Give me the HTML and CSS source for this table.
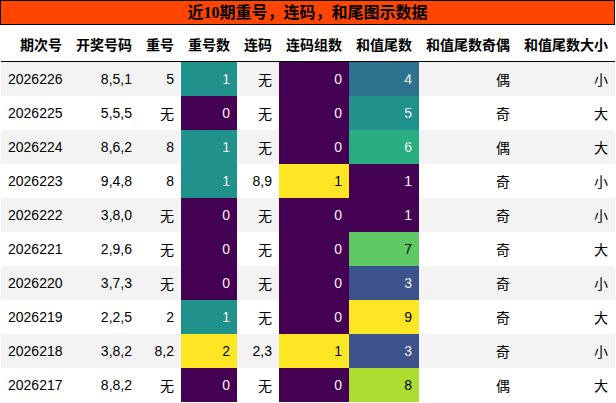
FILE: index.html
```html
<!DOCTYPE html>
<html lang="zh">
<head>
<meta charset="utf-8">
<title>近10期重号，连码，和尾图示数据</title>
<link rel="stylesheet" href="styles.css">
</head>
<body>
<div class="wrap">
  <div class="title">近10期重号，连码，和尾图示数据</div>
  <table class="grid">
    <colgroup>
      <col class="c1"><col class="c2"><col class="c3"><col class="c4"><col class="c5"><col class="c6"><col class="c7"><col class="c8"><col class="c9">
    </colgroup>
    <thead>
      <tr><th>期次号</th><th>开奖号码</th><th>重号</th><th>重号数</th><th>连码</th><th>连码组数</th><th>和值尾数</th><th>和值尾数奇偶</th><th>和值尾数大小</th></tr>
    </thead>
    <tbody>
      <tr><td>2026226</td><td>8,5,1</td><td>5</td><td class="v5">1</td><td>无</td><td class="v0">0</td><td class="v375">4</td><td>偶</td><td>小</td></tr>
      <tr><td>2026225</td><td>5,5,5</td><td>无</td><td class="v0">0</td><td>无</td><td class="v0">0</td><td class="v5">5</td><td>奇</td><td>大</td></tr>
      <tr><td>2026224</td><td>8,6,2</td><td>8</td><td class="v5">1</td><td>无</td><td class="v0">0</td><td class="v625">6</td><td>偶</td><td>大</td></tr>
      <tr><td>2026223</td><td>9,4,8</td><td>8</td><td class="v5">1</td><td>8,9</td><td class="v1">1</td><td class="v0">1</td><td>奇</td><td>小</td></tr>
      <tr><td>2026222</td><td>3,8,0</td><td>无</td><td class="v0">0</td><td>无</td><td class="v0">0</td><td class="v0">1</td><td>奇</td><td>小</td></tr>
      <tr><td>2026221</td><td>2,9,6</td><td>无</td><td class="v0">0</td><td>无</td><td class="v0">0</td><td class="v75">7</td><td>奇</td><td>大</td></tr>
      <tr><td>2026220</td><td>3,7,3</td><td>无</td><td class="v0">0</td><td>无</td><td class="v0">0</td><td class="v25">3</td><td>奇</td><td>小</td></tr>
      <tr><td>2026219</td><td>2,2,5</td><td>2</td><td class="v5">1</td><td>无</td><td class="v0">0</td><td class="v1">9</td><td>奇</td><td>大</td></tr>
      <tr><td>2026218</td><td>3,8,2</td><td>8,2</td><td class="v1">2</td><td>2,3</td><td class="v1">1</td><td class="v25">3</td><td>奇</td><td>小</td></tr>
      <tr><td>2026217</td><td>8,8,2</td><td>无</td><td class="v0">0</td><td>无</td><td class="v0">0</td><td class="v875">8</td><td>偶</td><td>大</td></tr>
    </tbody>
  </table>
</div>
</body>
</html>
```
FILE: styles.css
```css
html, body {
  margin: 0;
  padding: 0;
  background: #ffffff;
}

.wrap {
  width: 615px;
}

.title {
  box-sizing: border-box;
  width: 615px;
  height: 25px;
  border: 1px solid #000;
  background: #ff4500;
  color: #000;
  font-family: "Liberation Serif", "Noto Sans CJK SC", serif;
  font-weight: bold;
  font-size: 16px;
  line-height: 23px;
  text-align: center;
}

.grid {
  margin-left: 1px;
  width: 614px;
  table-layout: fixed;
  border-collapse: collapse;
  border-spacing: 0;
  font-family: "Liberation Sans", "Noto Sans CJK SC", sans-serif;
  font-size: 14px;
  color: #000;
}

.c1 { width: 68px; }
.c2 { width: 70px; }
.c3 { width: 42px; }
.c4 { width: 56px; }
.c5 { width: 42px; }
.c6 { width: 70px; }
.c7 { width: 70px; }
.c8 { width: 98px; }
.c9 { width: 98px; }

.grid th {
  height: 36px;
  padding: 0 7px 0 0;
  text-align: right;
  font-weight: bold;
  white-space: nowrap;
  border-bottom: 1px solid #000;
  box-sizing: border-box;
  vertical-align: middle;
  padding-top: 2px;
}

.grid td {
  height: 34px;
  padding: 0 7px;
  text-align: right;
  white-space: nowrap;
  vertical-align: middle;
}

.grid tbody tr:nth-child(odd) {
  background: #f3f3f3;
}

.grid tbody tr:nth-child(even) {
  background: #ffffff;
}

.grid td.v0   { background: #440154; color: #f1f1f1; }
.grid td.v25  { background: #3b528b; color: #f1f1f1; }
.grid td.v375 { background: #2c728e; color: #f1f1f1; }
.grid td.v5   { background: #21918c; color: #f1f1f1; }
.grid td.v625 { background: #28ae80; color: #f1f1f1; }
.grid td.v75  { background: #5ec962; color: #000; }
.grid td.v875 { background: #addc30; color: #000; }
.grid td.v1   { background: #fde725; color: #000; }
```
